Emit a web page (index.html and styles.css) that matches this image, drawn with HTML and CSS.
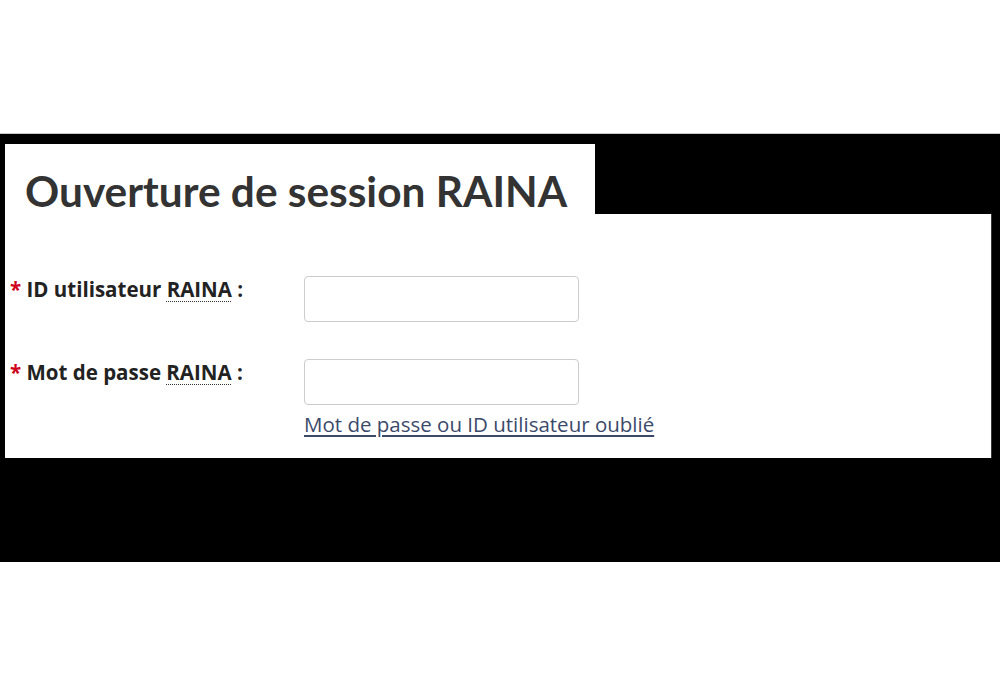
FILE: index.html
```html
<!DOCTYPE html>
<html lang="fr">
<head>
<meta charset="utf-8">
<title>Ouverture de session RAINA</title>
<link rel="stylesheet" href="styles.css">
</head>
<body>
<div class="top-space"></div>
<section class="frame">
  <div class="tab">
    <h1 class="title">Ouverture de session RAINA</h1>
  </div>
  <div class="panel">
    <form class="form">
      <label class="label" for="uid"><span class="req">*</span> ID utilisateur <abbr title="RAINA">RAINA</abbr> :</label>
      <div class="field"><input class="input" id="uid" type="text"></div>
      <label class="label" for="pwd"><span class="req">*</span> Mot de passe <abbr title="RAINA">RAINA</abbr> :</label>
      <div class="field">
        <input class="input" id="pwd" type="password">
        <a class="forgot" href="#">Mot de passe ou ID utilisateur oublié</a>
      </div>
    </form>
  </div>
</section>
</body>
</html>
```
FILE: styles.css
```css
html, body {
  margin: 0;
  padding: 0;
  background: #ffffff;
}
body {
  width: 1000px;
  height: 700px;
  overflow: hidden;
}
.top-space {
  height: 134px;
  border-bottom: 1px solid #c8c8c8;
  box-sizing: border-box;
}
.frame {
  background: #000;
  height: 428px;
  box-sizing: border-box;
  padding: 10px 8px 0 5px;
  display: flex;
  flex-direction: column;
}
.tab {
  width: 590px;
  height: 70px;
  background: #fff;
  box-sizing: border-box;
  padding: 26px 0 0 20px;
}
.title {
  margin: 0;
  font-family: Lato, "Liberation Sans", sans-serif;
  font-weight: 700;
  font-size: 42.4px;
  line-height: 42px;
  color: #333333;
  white-space: nowrap;
}
.panel {
  width: 987px;
  height: 244px;
  background: #fff;
  box-sizing: border-box;
  padding: 62px 0 0 5px;
  border-right: 1px solid #3a3a3a;
}
.form {
  display: grid;
  grid-template-columns: 294px 400px;
  row-gap: 37px;
  align-items: start;
}
.label {
  font-family: "Open Sans", "Liberation Sans", sans-serif;
  font-weight: 700;
  font-size: 20.5px;
  line-height: 24px;
  color: #222222;
  padding-top: 1px;
  white-space: nowrap;
}
.req {
  color: #d0021b;
}
abbr {
  text-decoration: underline dotted #333;
  text-decoration-thickness: 1px;
  text-underline-offset: 4px;
}
.field {
  display: flex;
  flex-direction: column;
  align-items: flex-start;
}
.input {
  width: 275px;
  height: 46px;
  box-sizing: border-box;
  border: 1px solid #cccccc;
  border-radius: 4px;
  background: #fff;
  margin: 0;
}
.forgot {
  margin-top: 6px;
  font-family: "Open Sans", "Liberation Sans", sans-serif;
  font-size: 20.5px;
  line-height: 26px;
  color: #3b4a6b;
  text-decoration: underline;
  text-underline-offset: 3px;
  white-space: nowrap;
}
```
